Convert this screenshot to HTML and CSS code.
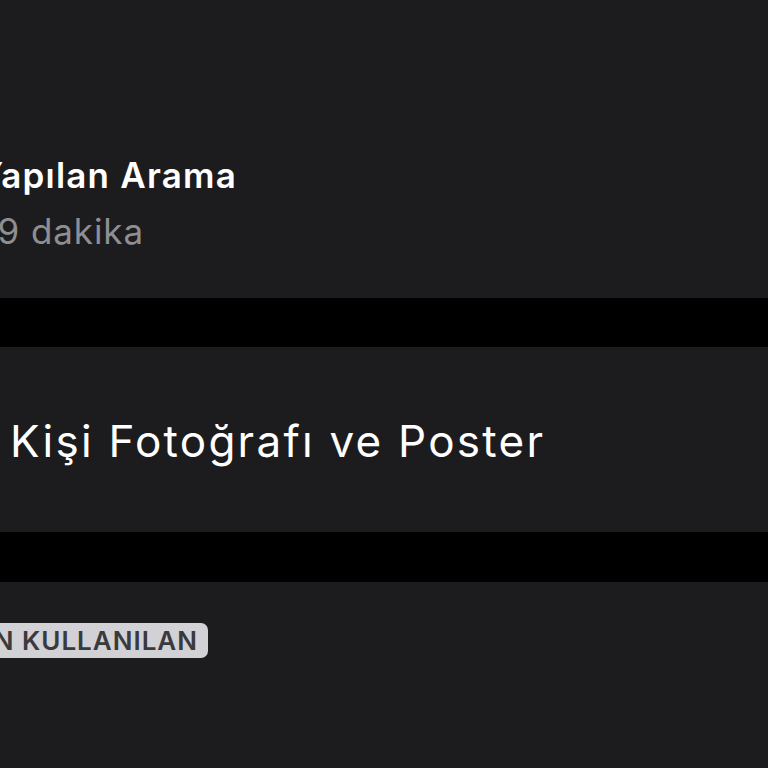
FILE: index.html
```html
<!DOCTYPE html>
<html lang="tr">
<head>
<meta charset="utf-8">
<link rel="stylesheet" href="styles.css">
</head>
<body>
<div class="screen">
  <section class="card card-top">
    <div class="line line-title"><span class="call-title">Son Yapılan Arama</span></div>
    <div class="line line-sub"><span class="call-sub">1 saat 9 dakika</span></div>
  </section>
  <div class="gap"></div>
  <section class="card card-mid">
    <div class="row-title">Kişi Fotoğrafı ve Poster</div>
  </section>
  <div class="gap gap2"></div>
  <section class="card card-bottom">
    <div class="line line-badge"><span class="badge">SON KULLANILAN</span></div>
  </section>
</div>
</body>
</html>
```
FILE: styles.css
```css
html, body {
  margin: 0;
  padding: 0;
  background: #1c1c1e;
  overflow: hidden;
}
.screen {
  width: 768px;
  height: 768px;
  display: flex;
  flex-direction: column;
  font-family: Inter, "Noto Sans", sans-serif;
  overflow: hidden;
}
.card {
  background: #1c1c1e;
  flex: none;
}
.line {
  display: flex;
  justify-content: flex-end;
  white-space: nowrap;
}
.line > span {
  flex: none;
}
.card-top {
  height: 298px;
  box-sizing: border-box;
  padding-top: 151px;
}
.line-title {
  width: 237px;
}
.call-title {
  color: #ffffff;
  font-weight: 600;
  font-size: 35px;
  line-height: 48px;
  letter-spacing: 1.2px;
}
.line-sub {
  width: 144px;
  margin-top: 8px;
}
.call-sub {
  color: #8e8e93;
  font-size: 35px;
  line-height: 48px;
  letter-spacing: 0.9px;
}
.gap {
  background: #000000;
  height: 49px;
  flex: none;
}
.gap2 {
  height: 50px;
}
.card-mid {
  height: 185px;
  box-sizing: border-box;
  padding-top: 64px;
}
.row-title {
  margin-left: 10px;
  color: #ffffff;
  font-size: 44px;
  line-height: 60px;
  letter-spacing: 2.25px;
  white-space: nowrap;
}
.card-bottom {
  flex: 1;
  padding-top: 41px;
}
.line-badge {
  width: 208px;
}
.badge {
  display: inline-block;
  background: #d1d1d6;
  color: #3a3a3c;
  font-weight: 600;
  font-size: 26px;
  line-height: 35px;
  padding: 0 10px;
  border-radius: 7px;
  letter-spacing: 1px;
}
```
